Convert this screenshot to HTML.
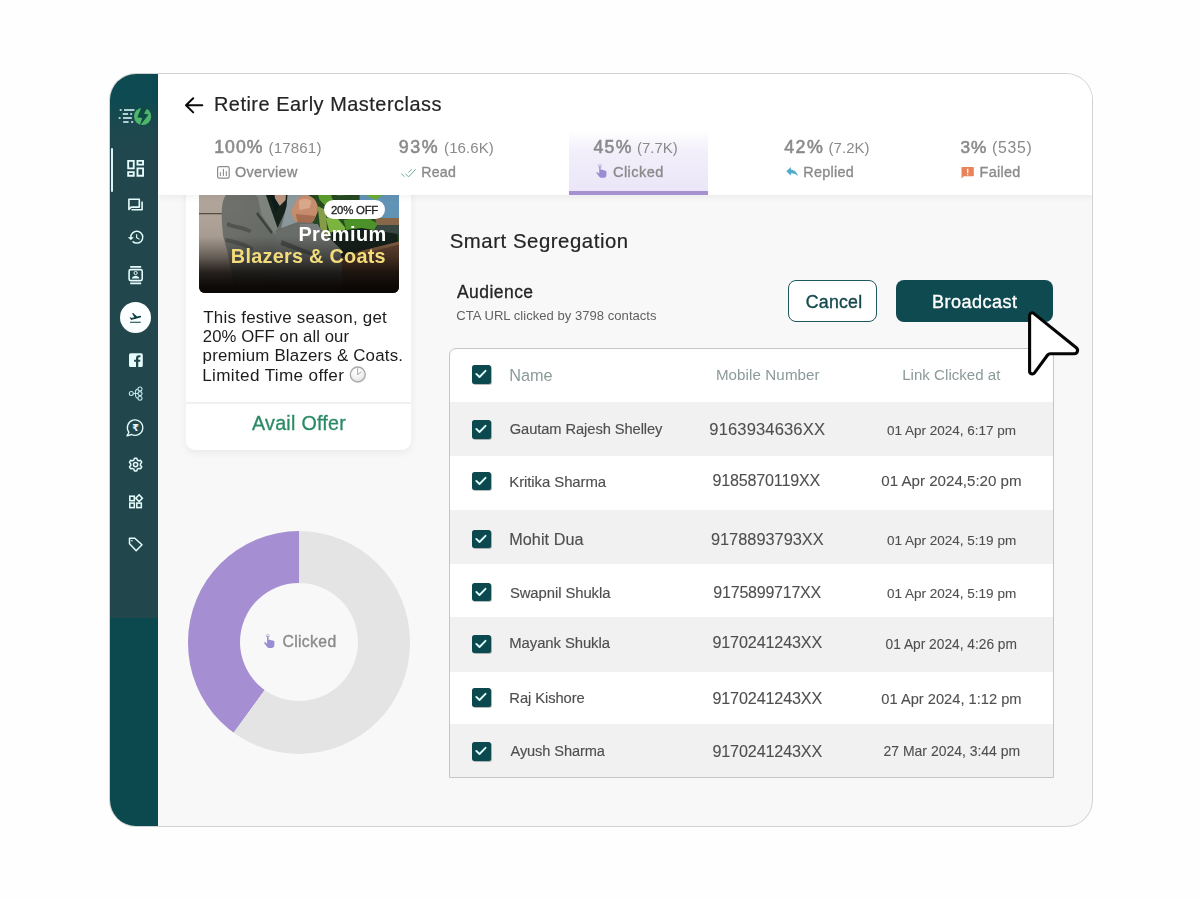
<!DOCTYPE html>
<html lang="en">
<head>
<meta charset="utf-8">
<title>Retire Early Masterclass - Smart Segregation</title>
<style>
*{box-sizing:border-box;margin:0;padding:0}
html,body{width:1200px;height:900px;overflow:hidden;background:#fefefe}
body{font-family:"Liberation Sans",sans-serif;position:relative}
.t{position:absolute;white-space:nowrap;display:block}
#tx{position:absolute;left:0;top:0;width:1200px;height:900px;will-change:transform}
svg{display:block;overflow:visible;position:absolute}
#frame{position:absolute;left:109.5px;top:73.5px;width:982.7px;height:752.1px;border-radius:26px;box-shadow:0 0 0 1px #d2d2d2;background:#f8f8f8;overflow:hidden}
#pg{position:absolute;left:-109.5px;top:-73.5px;width:1200px;height:900px}
#pg div,#pg i{position:absolute;display:block}
#side{left:108px;top:72px;width:50px;height:756px;background:linear-gradient(180deg,#0d4a52 0px,#0e4a51 28px,#1c484e 55px,#21474d 90px,#21474d 546px,#0c494e 546.5px,#0c494e 100%)}
#ind{left:110.7px;top:148px;width:2.3px;height:43.7px;background:#d9f6f6;border-radius:1px}
#actv{left:119.8px;top:302.3px;width:31.2px;height:31.2px;border-radius:50%;background:#fbffff}
#head{left:158px;top:72px;width:936px;height:122.6px;background:#fff;box-shadow:0 2px 7px rgba(0,0,0,.06)}
#tabsel{left:568.8px;top:130px;width:139.4px;height:64.6px;background:linear-gradient(180deg,rgba(238,234,249,0) 0,#f2effa 35%,#ebe6f8 100%);border-bottom:4.8px solid #a590d2}
#card{left:186px;top:170px;width:225px;height:280px;background:#fff;border-radius:0 0 9px 9px;box-shadow:0 3px 9px rgba(0,0,0,.06)}
#photo{left:199.4px;top:180px;width:199.6px;height:112.8px;border-radius:0 0 6px 6px;overflow:hidden;background:#2b2622}
#badge{left:323.6px;top:200px;width:61.5px;height:18.5px;border-radius:10px;background:#fff}
#cdiv{left:186px;top:402.3px;width:225px;height:1.5px;background:#f0f0f0}
#donut{left:187.5px;top:531px;width:222.8px;height:222.8px;border-radius:50%;background:conic-gradient(#e4e4e4 0deg 215.8deg,#a58fd2 216.2deg 360deg)}
#donut i{left:52.4px;top:52.4px;width:118px;height:118px;border-radius:50%;background:#f8f8f8}
#tbl{left:449px;top:348px;width:604.8px;height:430px;border:1px solid #c6c6c6;border-radius:7px 0 0 0;background:#fff;overflow:hidden}
.rw{left:450px;width:602.8px;height:53.7px;background:#f1f1f1}
.cb{left:472px;width:18.5px;height:18.5px;border-radius:2.5px;background:#0c494e;box-shadow:.8px .8px 0 rgba(60,75,75,.5)}
#cancel{left:787.8px;top:279.7px;width:89.4px;height:42.6px;border:1.6px solid #1d595d;border-radius:8px;background:#fff}
#bcast{left:896px;top:279.7px;width:157.2px;height:42.6px;border-radius:8px;background:#0e4a50}
</style>
</head>
<body>
<div id="frame"><div id="pg">
<div id="side"></div>
<div id="ind"></div>
<div id="actv"></div>
<div id="card"></div>
<div id="photo"><svg width="199.6" height="112.8" viewBox="199.4 180 199.6 112.8" style="left:0;top:0" preserveAspectRatio="none"><defs><filter id="bl" x="-5%" y="-5%" width="110%" height="110%"><feGaussianBlur stdDeviation="0.7"/></filter><linearGradient id="dk" x1="0" y1="0" x2="0" y2="1"><stop offset="0" stop-color="#0a0705" stop-opacity="0"/><stop offset=".5" stop-color="#0a0705" stop-opacity=".04"/><stop offset=".68" stop-color="#0a0705" stop-opacity=".4"/><stop offset=".82" stop-color="#0a0705" stop-opacity=".8"/><stop offset=".94" stop-color="#0a0705" stop-opacity=".97"/><stop offset="1" stop-color="#0a0705" stop-opacity="1"/></linearGradient><linearGradient id="blz" x1="0" y1="0" x2="1" y2="0"><stop offset="0" stop-color="#70736e"/><stop offset=".5" stop-color="#6a6d69"/><stop offset="1" stop-color="#727573"/></linearGradient><linearGradient id="sofa" x1="0" y1="0" x2="0" y2="1"><stop offset="0" stop-color="#b5a99e"/><stop offset=".45" stop-color="#a99d92"/><stop offset="1" stop-color="#7d7168"/></linearGradient></defs><g filter="url(#bl)"><rect x="195" y="176" width="70" height="38" fill="#b3a79c"/><rect x="195" y="214" width="70" height="82" fill="url(#sofa)"/><rect x="195" y="213" width="30" height="1.300" fill="#5a4f47"/><rect x="300" y="176" width="104" height="80" fill="#274a22"/><rect x="360" y="176" width="44" height="43" fill="#6496b9"/><rect x="376" y="218" width="28" height="8" fill="#8a6a4c"/><rect x="376" y="225" width="28" height="10" fill="#3a4a44"/><path d="M314 180l12 0l8 22l-6 6l-8-8z" fill="#5da02e"/><path d="M330 180h24l4 14l-20 2z" fill="#3c7a26"/><path d="M352 180h16l14 16l-6 4l-20-10z" fill="#6eb034"/><path d="M326 218l10-2l10 12l-4 8l-12-4z" fill="#7fb940"/><path d="M344 220l22-4l12 8l-6 10l-24 0z" fill="#4f962c"/><path d="M318 206l8 4l2 26l-6 4z" fill="#8aa04a"/><path d="M332 232l30-4l36 6v14l-40 12l-26-6z" fill="#13241a"/><path d="M330 262l32-11.300l40-9.700v56h-72z" fill="#6b4a35"/><path d="M362 250.700l40-9.700v3l-40 10z" fill="#8d664a"/><path d="M237 180c-6 10-13 14-14.500 26c-1 10 0 20 1 30l4.500 16l8 44h106v-40l-22-24l-22-30l-16-22z" fill="url(#blz)"/><path d="M228 222c8 4 16 3 24 8l-2 3c-8-4-16-4-23-7z" fill="#545752"/><path d="M226 238c10 2 20 4 28 10l-2 3c-8-5-18-7-26-9z" fill="#565954"/><path d="M252 180h10l17 47l-3 8l-14-20l-4-18l-8-6z" fill="#80867f"/><path d="M258 212l15 20l-1.500 2l-15-20z" fill="#3f423f"/><path d="M261 180h30l-3 26l-10 22z" fill="#13231f"/><path d="M274 180h13l-1 20l-6 6l-5-8z" fill="#bf9882"/><path d="M273 180l2 18l5 8l-4 6l-9-26z" fill="#0f1d1a"/><path d="M289 180h16l6 20l-12 24l-18 6l6-24z" fill="#8f9ca0"/><path d="M297 200c3-5 10-6 15-3c5 3 7 9 6 15l-4 9l-14 4c-5-3-8-9-8-15z" fill="#c98f70"/><path d="M299 201c4-3 9-3 13 0l-2 7l-10 2z" fill="#dcab8c"/><path d="M296 214l20 2l-3 6l-14 3z" fill="#a96f52"/><path d="M276 230l22-8l18 2l26 26l-6 46h-60z" fill="#6c6f6c"/><path d="M282 240l40 16l-1 3l-40-14z" fill="#4c4f4d"/><path d="M300 224l18 0l4 6l-20 2z" fill="#7d8280"/></g><rect x="199" y="180" width="201" height="113" fill="url(#dk)"/></svg></div>
<div id="badge"></div>
<div id="cdiv"></div>
<div id="donut"><i></i></div>
<div id="tbl"></div>
<div class="rw" style="top:402.3px"></div>
<div class="rw" style="top:510px"></div>
<div class="rw" style="top:617.4px;height:54.2px"></div>
<div class="rw" style="top:723.9px;height:53.3px"></div>
<div class="cb" style="top:365.4px"><svg width="18.5" height="18.5" viewBox="0 0 18.5 18.5" style="left:0;top:0"><path d="M4.3 8.9L7.5 12L13.5 5.8" fill="none" stroke="#dcfcfc" stroke-width="1.9" stroke-linecap="round" stroke-linejoin="round"/></svg></div>
<div class="cb" style="top:420px"><svg width="18.5" height="18.5" viewBox="0 0 18.5 18.5" style="left:0;top:0"><path d="M4.3 8.9L7.5 12L13.5 5.8" fill="none" stroke="#dcfcfc" stroke-width="1.9" stroke-linecap="round" stroke-linejoin="round"/></svg></div>
<div class="cb" style="top:471.5px"><svg width="18.5" height="18.5" viewBox="0 0 18.5 18.5" style="left:0;top:0"><path d="M4.3 8.9L7.5 12L13.5 5.8" fill="none" stroke="#dcfcfc" stroke-width="1.9" stroke-linecap="round" stroke-linejoin="round"/></svg></div>
<div class="cb" style="top:529.8px"><svg width="18.5" height="18.5" viewBox="0 0 18.5 18.5" style="left:0;top:0"><path d="M4.3 8.9L7.5 12L13.5 5.8" fill="none" stroke="#dcfcfc" stroke-width="1.9" stroke-linecap="round" stroke-linejoin="round"/></svg></div>
<div class="cb" style="top:582.6px"><svg width="18.5" height="18.5" viewBox="0 0 18.5 18.5" style="left:0;top:0"><path d="M4.3 8.9L7.5 12L13.5 5.8" fill="none" stroke="#dcfcfc" stroke-width="1.9" stroke-linecap="round" stroke-linejoin="round"/></svg></div>
<div class="cb" style="top:634.5px"><svg width="18.5" height="18.5" viewBox="0 0 18.5 18.5" style="left:0;top:0"><path d="M4.3 8.9L7.5 12L13.5 5.8" fill="none" stroke="#dcfcfc" stroke-width="1.9" stroke-linecap="round" stroke-linejoin="round"/></svg></div>
<div class="cb" style="top:688px"><svg width="18.5" height="18.5" viewBox="0 0 18.5 18.5" style="left:0;top:0"><path d="M4.3 8.9L7.5 12L13.5 5.8" fill="none" stroke="#dcfcfc" stroke-width="1.9" stroke-linecap="round" stroke-linejoin="round"/></svg></div>
<div class="cb" style="top:742px"><svg width="18.5" height="18.5" viewBox="0 0 18.5 18.5" style="left:0;top:0"><path d="M4.3 8.9L7.5 12L13.5 5.8" fill="none" stroke="#dcfcfc" stroke-width="1.9" stroke-linecap="round" stroke-linejoin="round"/></svg></div>
<div id="cancel"></div>
<div id="bcast"></div>
<div id="head"></div>
<div id="tabsel"></div>
<svg width="1200" height="900" viewBox="0 0 1200 900" style="left:0;top:0" ><g stroke="#e6fbfb" stroke-width="1.7" fill="none"><path d="M119.7 110h1.9M124 110h10.4"/><path d="M122.7 114h5.4M130.2 114h1.9"/><path d="M118.7 118h1.9M123 118h8.8"/><path d="M123.2 122h5.4M131.2 122h1.9"/></g><circle cx="142.6" cy="116.4" r="8.6" fill="#4fb56a"/><path d="M140.400 106.700L137.500 118L142.500 118L140.900 126.600L148.300 113.600L143.700 113.600L146.100 107Z" fill="#0f4a45" transform="rotate(8 142.6 116.4)"/><path transform="translate(124.45 157.2) scale(.93)" fill="#e6fbfb" d="M19 5v2h-4V5h4M9 5v6H5V5h4m10 8v6h-4v-6h4M9 17v2H5v-2h4M21 3h-8v6h8V3zM11 3H3v10h8V3zm10 8h-8v10h8V11zm-10 4H3v6h8v-6z"/><g fill="none" stroke="#e6fbfb" stroke-width="1.6" stroke-linejoin="round"><path d="M128.9 199.2h10.4v7.9h-8.1l-2.3 2.4z"/><path d="M142.1 201.6v8.2h-10.6"/></g><path transform="translate(127.1 228.2) scale(.745)" fill="#e6fbfb" d="M13 3a9 9 0 0 0-9 9H1l3.890 3.890.070.140L9 12H6c0-3.870 3.130-7 7-7s7 3.130 7 7-3.130 7-7 7c-1.930 0-3.680-.790-4.940-2.060l-1.420 1.420A8.954 8.954 0 0 0 13 21a9 9 0 0 0 0-18zm-1 5v5l4.280 2.540.720-1.210-3.500-2.080V8H12z"/><g fill="none" stroke="#e6fbfb" stroke-width="1.6"><rect x="129.1" y="269.6" width="13.1" height="11" rx="1.6"/><path d="M130.2 266.8h11M130.2 283.3h11" stroke-width="1.7"/></g><circle cx="135.6" cy="273" r="1.600" fill="none" stroke="#e6fbfb" stroke-width="1"/><path d="M131.800 278.600c.4-2.100 2.200-2.900 3.800-2.900s3.400.8 3.800 2.900z" fill="#e6fbfb"/><path transform="translate(128.6 310.9) scale(.565)" fill="#0c3e42" d="M2.500 19h19v2h-19v-2zm19.570-9.360c-.210-.800-1.040-1.280-1.840-1.060L14.920 10l-6.900-6.430-1.930.510 4.140 7.170-4.970 1.330-1.970-1.540-1.450.390 2.590 4.490s7.120-1.900 16.570-4.430c.810-.230 1.280-1.050 1.070-1.850z"/><path fill-rule="evenodd" fill="#e6fbfb" d="M130.600 353.300h10.600a1.600 1.600 0 0 1 1.600 1.600v10.600a1.600 1.600 0 0 1-1.600 1.600h-2.900v-5.300h1.800l.3-2.100h-2.100v-1.350c0-.600.300-1.050 1.100-1.050h1.100v-1.900c-.2 0-.9-.1-1.700-.1c-1.700 0-2.800 1-2.800 2.900v1.500h-1.900v2.100h1.900v5.300h-5.400a1.600 1.600 0 0 1-1.600-1.600v-10.600a1.600 1.600 0 0 1 1.600-1.600z"/><g fill="none" stroke="#c5e9ea" stroke-width="1.05"><circle cx="131.3" cy="393.5" r="2"/><circle cx="140" cy="389" r="2"/><circle cx="140" cy="393.6" r="2"/><circle cx="140" cy="398.2" r="2"/><path d="M133.300 393.500h4.700M138 389c-2.600 0-2.600 1.800-2.600 4.500c0 2.700 0 4.700 2.600 4.700"/></g><path fill="none" stroke="#e6fbfb" stroke-width="1.35" stroke-linejoin="round" d="M128.950 432.300A7.700 7.700 0 1 1 131.600 434.500L127 435.900Z"/><text x="135.600" y="431.300" font-family="DejaVu Sans, Liberation Sans, sans-serif" font-size="9.500" font-weight="bold" text-anchor="middle" fill="#e6fbfb">₹</text><path d="M133.54 460.25Q134.06 459.95 134.13 459.35L134.21 458.73Q134.29 458.13 134.89 458.13L136.31 458.13Q136.91 458.13 136.99 458.73L137.07 459.35Q137.14 459.95 137.66 460.25L138.34 460.64Q138.86 460.94 139.41 460.71L139.99 460.46Q140.55 460.23 140.85 460.75L141.56 461.98Q141.86 462.50 141.38 462.86L140.88 463.25Q140.40 463.61 140.40 464.21L140.40 464.99Q140.40 465.59 140.88 465.95L141.38 466.34Q141.86 466.70 141.56 467.22L140.85 468.45Q140.55 468.97 139.99 468.74L139.41 468.49Q138.86 468.26 138.34 468.56L137.66 468.95Q137.14 469.25 137.07 469.85L136.99 470.47Q136.91 471.07 136.31 471.07L134.89 471.07Q134.29 471.07 134.21 470.47L134.13 469.85Q134.06 469.25 133.54 468.95L132.86 468.56Q132.34 468.26 131.79 468.49L131.21 468.74Q130.65 468.97 130.35 468.45L129.64 467.22Q129.34 466.70 129.82 466.34L130.32 465.95Q130.80 465.59 130.80 464.99L130.80 464.21Q130.80 463.61 130.32 463.25L129.82 462.86Q129.34 462.50 129.64 461.98L130.35 460.75Q130.65 460.23 131.21 460.46L131.79 460.71Q132.34 460.94 132.86 460.64Z" fill="none" stroke="#e6fbfb" stroke-width="1.5" stroke-linejoin="round"/><circle cx="135.6" cy="464.6" r="2.1" fill="none" stroke="#e6fbfb" stroke-width="1.5"/><g fill="none" stroke="#e6fbfb" stroke-width="1.55"><rect x="129.8" y="496.2" width="4.500" height="4.500"/><rect x="129.8" y="503.100" width="4.500" height="4.500"/><rect x="136.800" y="503.100" width="4.500" height="4.500"/><path d="M139.100 494.800l3.300 3.400l-3.300 3.400l-3.300-3.400z"/></g><path fill="none" stroke="#e6fbfb" stroke-width="1.5" stroke-linejoin="round" d="M129.500 538.300h5.300l7.200 6.500l-5.800 5.900l-6.700-6.900z"/><circle cx="131.900" cy="540.700" r=".8" fill="#e6fbfb"/><path d="M202.300 105.300H186M193.200 98.300L186 105.300L193.200 112.400" fill="none" stroke="#0a0a0a" stroke-width="2" stroke-linecap="round" stroke-linejoin="round"/><g fill="none" stroke="#8b8b8b"><rect x="217.600" y="166.600" width="11.600" height="11.600" rx="1.600" stroke-width="1.200"/><path d="M220.400 172.500v3M223.400 169.300v6.200M226.300 171.500v4" stroke-width="1.100" stroke-linecap="round"/></g><path d="M401.200 173.500l3.400 3.400M405.500 173.700l3 3.200l7.200-7.600M408.400 172.600l3.300-3.400" fill="none" stroke="#6fae96" stroke-width="1"/><g transform="translate(596.2 164.1) scale(1)"><circle cx="3.700" cy="1.800" r="1.500" fill="none" stroke="#b5add6" stroke-width=".7"/><path fill="#9b8dd4" d="M3 2.200c0-.500 1.400-.500 1.400 0v3.600c.3-.5 1.500-.4 1.500.2c.3-.4 1.500-.3 1.500.3c.4-.4 1.500-.2 1.500.5c.5-.3 1.300 0 1.300.7v3.300c0 1.600-1 2.900-2.700 2.900h-2.200c-1.300 0-1.900-.6-2.600-1.500l-2.500-3.200c-.4-.6.500-1.300 1.100-.8l1.700 1.400z"/></g><g transform="translate(264 634) scale(1.02)"><circle cx="3.700" cy="1.800" r="1.500" fill="none" stroke="#b5add6" stroke-width=".7"/><path fill="#9b8dd4" d="M3 2.200c0-.500 1.400-.500 1.400 0v3.600c.3-.5 1.500-.4 1.500.2c.3-.4 1.500-.3 1.500.3c.4-.4 1.500-.2 1.500.5c.5-.3 1.300 0 1.300.7v3.300c0 1.600-1 2.900-2.700 2.900h-2.200c-1.300 0-1.900-.6-2.600-1.500l-2.500-3.200c-.4-.6.500-1.300 1.100-.8l1.700 1.400z"/></g><defs><radialGradient id="ckg" cx=".4" cy=".32" r=".75"><stop offset="0" stop-color="#ffffff"/><stop offset=".6" stop-color="#f1f1f1"/><stop offset="1" stop-color="#d6d6d6"/></radialGradient></defs><circle cx="357.800" cy="374.500" r="7.500" fill="url(#ckg)" stroke="#a9a9a9" stroke-width="1.300"/><path d="M357.600 374.400V368.700M357.600 374.400L361 372.300" fill="none" stroke="#a4a4a4" stroke-width=".9" stroke-linecap="round"/><path transform="translate(784.4 163.900) scale(.645 .62)" fill="#52abc9" d="M10 9V5l-7 7 7 7v-4.100c5 0 8.500 1.600 11 5.100-1-5-4-10-11-11z"/><path d="M962.300 167h10.700a.8.800 0 0 1 .8.800v7.700a.8.800 0 0 1-.8.800h-9.200l-2.300 2.200v-10.700a.8.800 0 0 1 .8-.8z" fill="#e8835b"/><path d="M967.700 168.700v4.200" stroke="#fff" stroke-width="1.300"/><circle cx="967.700" cy="174.500" r=".75" fill="#fff"/></svg>
</div></div>
<svg width="1200" height="900" viewBox="0 0 1200 900" style="left:0;top:0"><path d="M1029.60 315.33A2.5 2.5 0 0 1 1033.67 313.39L1076.33 347.83A3.3 3.3 0 0 1 1074.26 353.70L1050.22 353.70A3.2 3.2 0 0 0 1047.64 355.00L1034.47 372.88A2.7 2.7 0 0 1 1029.60 371.28Z" fill="#fff" stroke="#050505" stroke-width="3.1" stroke-linejoin="round"/></svg>
<div id="tx">
<span class="t" style="left:213.91px;top:91px;font-size:19.93px;line-height:26px;letter-spacing:0.510px;color:#242424;-webkit-text-stroke:0.2px #242424;">Retire Early Masterclass</span>
<span class="t" style="left:214.26px;top:135px;font-size:17.65px;line-height:24px;letter-spacing:1.036px;color:#8a8a8a;-webkit-text-stroke:0.55px #8a8a8a;">100%</span>
<span class="t" style="left:268.59px;top:137px;font-size:15.14px;line-height:21px;letter-spacing:0.121px;color:#8a8a8a;">(17861)</span>
<span class="t" style="left:234.92px;top:162px;font-size:14.4px;line-height:20px;letter-spacing:0.350px;color:#8a8a8a;-webkit-text-stroke:0.35px #8a8a8a;">Overview</span>
<span class="t" style="left:398.79px;top:135px;font-size:17.84px;line-height:24px;letter-spacing:1.514px;color:#8a8a8a;-webkit-text-stroke:0.55px #8a8a8a;">93%</span>
<span class="t" style="left:444.10px;top:137px;font-size:15.06px;line-height:21px;letter-spacing:0.053px;color:#8a8a8a;">(16.6K)</span>
<span class="t" style="left:421.37px;top:162px;font-size:14.17px;line-height:20px;letter-spacing:0.185px;color:#8a8a8a;-webkit-text-stroke:0.35px #8a8a8a;">Read</span>
<span class="t" style="left:593.40px;top:135px;font-size:17.71px;line-height:24px;letter-spacing:1.337px;color:#8a8a8a;-webkit-text-stroke:0.55px #8a8a8a;">45%</span>
<span class="t" style="left:637.10px;top:137px;font-size:14.98px;line-height:21px;letter-spacing:-0.020px;color:#8a8a8a;">(7.7K)</span>
<span class="t" style="left:613.02px;top:162px;font-size:14.55px;line-height:20px;letter-spacing:0.431px;color:#8a8a8a;-webkit-text-stroke:0.35px #8a8a8a;">Clicked</span>
<span class="t" style="left:784.14px;top:135px;font-size:17.87px;line-height:24px;letter-spacing:1.556px;color:#8a8a8a;-webkit-text-stroke:0.55px #8a8a8a;">42%</span>
<span class="t" style="left:828.60px;top:137px;font-size:15.02px;line-height:21px;letter-spacing:0.009px;color:#8a8a8a;">(7.2K)</span>
<span class="t" style="left:803.35px;top:162px;font-size:14.36px;line-height:20px;letter-spacing:0.293px;color:#8a8a8a;-webkit-text-stroke:0.35px #8a8a8a;">Replied</span>
<span class="t" style="left:960.48px;top:135px;font-size:17.29px;line-height:24px;letter-spacing:1.033px;color:#8a8a8a;-webkit-text-stroke:0.55px #8a8a8a;">3%</span>
<span class="t" style="left:992.05px;top:137px;font-size:15.84px;line-height:21px;letter-spacing:0.703px;color:#8a8a8a;">(535)</span>
<span class="t" style="left:979.60px;top:162px;font-size:14.39px;line-height:20px;letter-spacing:0.303px;color:#8a8a8a;-webkit-text-stroke:0.35px #8a8a8a;">Failed</span>
<span class="t" style="left:331.03px;top:202px;font-size:11.38px;line-height:16px;letter-spacing:-0.229px;color:#222;-webkit-text-stroke:0.3px #222;">20% OFF</span>
<span class="t" style="left:298.41px;top:221px;font-size:19.91px;line-height:26px;letter-spacing:0.429px;color:#fff;font-weight:bold;">Premium</span>
<span class="t" style="left:230.81px;top:243px;font-size:19.84px;line-height:26px;letter-spacing:0.275px;color:#f3dc7c;font-weight:bold;">Blazers &amp; Coats</span>
<span class="t" style="left:203.26px;top:306px;font-size:16.95px;line-height:23px;letter-spacing:0.245px;color:#1c1c1c;">This festive season, get</span>
<span class="t" style="left:202.76px;top:325px;font-size:16.72px;line-height:23px;letter-spacing:0.087px;color:#1c1c1c;">20% OFF on all our</span>
<span class="t" style="left:202.59px;top:344px;font-size:16.87px;line-height:23px;letter-spacing:0.198px;color:#1c1c1c;">premium Blazers &amp; Coats.</span>
<span class="t" style="left:202.23px;top:364px;font-size:17.11px;line-height:23px;letter-spacing:0.354px;color:#1c1c1c;">Limited Time offer</span>
<span class="t" style="left:252.00px;top:410px;font-size:19.69px;line-height:26px;letter-spacing:0.266px;color:#2b8a66;-webkit-text-stroke:0.3px #2b8a66;">Avail Offer</span>
<span class="t" style="left:282.51px;top:631px;font-size:15.8px;line-height:21px;letter-spacing:0.312px;color:#8a8a8a;-webkit-text-stroke:0.35px #8a8a8a;">Clicked</span>
<span class="t" style="left:449.69px;top:228px;font-size:20.33px;line-height:26px;letter-spacing:0.559px;color:#242424;-webkit-text-stroke:0.2px #242424;">Smart Segregation</span>
<span class="t" style="left:457.00px;top:280px;font-size:17.51px;line-height:24px;letter-spacing:0.445px;color:#242424;-webkit-text-stroke:0.3px #242424;">Audience</span>
<span class="t" style="left:456.35px;top:306px;font-size:13.04px;line-height:19px;letter-spacing:0.033px;color:#616161;">CTA URL clicked by 3798 contacts</span>
<span class="t" style="left:805.81px;top:290px;font-size:17.74px;line-height:24px;letter-spacing:0.214px;color:#14494d;-webkit-text-stroke:0.35px #14494d;">Cancel</span>
<span class="t" style="left:931.96px;top:290px;font-size:18.06px;line-height:24px;letter-spacing:0.461px;color:#fff;-webkit-text-stroke:0.35px #fff;">Broadcast</span>
<span class="t" style="left:509.20px;top:364px;font-size:16.29px;line-height:22px;letter-spacing:-0.020px;color:#8b9a9a;">Name</span>
<span class="t" style="left:715.89px;top:364px;font-size:15.13px;line-height:21px;letter-spacing:0.102px;color:#8b9a9a;">Mobile Number</span>
<span class="t" style="left:902.20px;top:364px;font-size:15.05px;line-height:21px;letter-spacing:0.029px;color:#8b9a9a;">Link Clicked at</span>
<span class="t" style="left:509.77px;top:419px;font-size:14.68px;line-height:20px;letter-spacing:-0.074px;color:#4f4f4f;-webkit-text-stroke:0.15px #4f4f4f;">Gautam Rajesh Shelley</span>
<span class="t" style="left:709.34px;top:418px;font-size:16.59px;line-height:23px;letter-spacing:0.118px;color:#4f4f4f;-webkit-text-stroke:0.1px #4f4f4f;">9163934636XX</span>
<span class="t" style="left:886.89px;top:421px;font-size:13.51px;line-height:19px;letter-spacing:0.001px;color:#4f4f4f;-webkit-text-stroke:0.1px #4f4f4f;">01 Apr 2024, 6:17 pm</span>
<span class="t" style="left:509.31px;top:471px;font-size:14.92px;line-height:21px;letter-spacing:-0.073px;color:#4f4f4f;-webkit-text-stroke:0.15px #4f4f4f;">Kritika Sharma</span>
<span class="t" style="left:712.46px;top:469px;font-size:16.1px;line-height:22px;letter-spacing:-0.182px;color:#4f4f4f;-webkit-text-stroke:0.1px #4f4f4f;">9185870119XX</span>
<span class="t" style="left:881.35px;top:470px;font-size:15.11px;line-height:21px;letter-spacing:-0.001px;color:#4f4f4f;-webkit-text-stroke:0.1px #4f4f4f;">01 Apr 2024,5:20 pm</span>
<span class="t" style="left:509.20px;top:528px;font-size:16.2px;line-height:22px;letter-spacing:0.081px;color:#4f4f4f;-webkit-text-stroke:0.15px #4f4f4f;">Mohit Dua</span>
<span class="t" style="left:710.94px;top:528px;font-size:16.38px;line-height:22px;letter-spacing:-0.010px;color:#4f4f4f;-webkit-text-stroke:0.1px #4f4f4f;">9178893793XX</span>
<span class="t" style="left:886.89px;top:531px;font-size:13.53px;line-height:19px;letter-spacing:0.002px;color:#4f4f4f;-webkit-text-stroke:0.1px #4f4f4f;">01 Apr 2024, 5:19 pm</span>
<span class="t" style="left:509.91px;top:583px;font-size:14.85px;line-height:20px;letter-spacing:-0.077px;color:#4f4f4f;-webkit-text-stroke:0.15px #4f4f4f;">Swapnil Shukla</span>
<span class="t" style="left:713.36px;top:582px;font-size:16.02px;line-height:21px;letter-spacing:-0.232px;color:#4f4f4f;-webkit-text-stroke:0.1px #4f4f4f;">9175899717XX</span>
<span class="t" style="left:886.89px;top:584px;font-size:13.53px;line-height:19px;letter-spacing:0.002px;color:#4f4f4f;-webkit-text-stroke:0.1px #4f4f4f;">01 Apr 2024, 5:19 pm</span>
<span class="t" style="left:509.31px;top:633px;font-size:14.86px;line-height:20px;letter-spacing:-0.080px;color:#4f4f4f;-webkit-text-stroke:0.15px #4f4f4f;">Mayank Shukla</span>
<span class="t" style="left:712.45px;top:631px;font-size:16.16px;line-height:22px;letter-spacing:-0.146px;color:#4f4f4f;-webkit-text-stroke:0.1px #4f4f4f;">9170241243XX</span>
<span class="t" style="left:885.59px;top:635px;font-size:13.74px;line-height:19px;letter-spacing:0.002px;color:#4f4f4f;-webkit-text-stroke:0.1px #4f4f4f;">01 Apr 2024, 4:26 pm</span>
<span class="t" style="left:509.32px;top:688px;font-size:14.74px;line-height:20px;letter-spacing:-0.073px;color:#4f4f4f;-webkit-text-stroke:0.15px #4f4f4f;">Raj Kishore</span>
<span class="t" style="left:712.45px;top:687px;font-size:16.16px;line-height:22px;letter-spacing:-0.146px;color:#4f4f4f;-webkit-text-stroke:0.1px #4f4f4f;">9170241243XX</span>
<span class="t" style="left:881.36px;top:689px;font-size:14.67px;line-height:20px;letter-spacing:-0.001px;color:#4f4f4f;-webkit-text-stroke:0.1px #4f4f4f;">01 Apr 2024, 1:12 pm</span>
<span class="t" style="left:510.50px;top:741px;font-size:14.58px;line-height:20px;letter-spacing:-0.083px;color:#4f4f4f;-webkit-text-stroke:0.15px #4f4f4f;">Ayush Sharma</span>
<span class="t" style="left:712.45px;top:740px;font-size:16.16px;line-height:22px;letter-spacing:-0.146px;color:#4f4f4f;-webkit-text-stroke:0.1px #4f4f4f;">9170241243XX</span>
<span class="t" style="left:883.60px;top:741px;font-size:13.96px;line-height:20px;letter-spacing:-0.000px;color:#4f4f4f;-webkit-text-stroke:0.1px #4f4f4f;">27 Mar 2024, 3:44 pm</span>
</div>
</body>
</html>
